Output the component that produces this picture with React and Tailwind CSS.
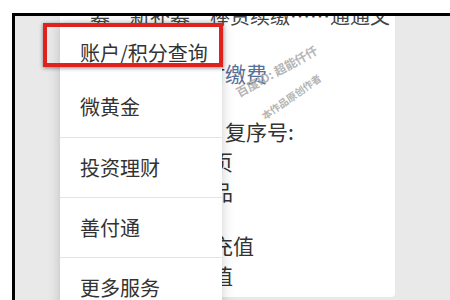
import React from 'react';

const menuItems = ['账户/积分查询', '微黄金', '投资理财', '善付通', '更多服务'];

const App = () => {
  return (
    <div
      className="w-[450px] h-[300px] bg-white pt-[13px] pl-[12px] overflow-hidden"
      style={{ fontFamily: '"Noto Sans CJK SC", "Noto Sans", sans-serif' }}
    >
      {/* framed screenshot area */}
      <div className="relative h-[290px] border-t-[3px] border-l-[3px] border-black bg-[#e9e9e9] flex">
        {/* content card behind the menu */}
        <div className="relative ml-[45px] w-[335px] h-[281px] bg-white rounded-br-[4px] overflow-hidden text-[#333]">
          <p className="mt-[-10px] pl-[30px] text-[20px] leading-[20px] whitespace-nowrap text-[#444]">
            募　新补募　棒资续缴……通通文
          </p>

          <div className="mt-[32px] pl-[123px] text-[21px] leading-[30px] whitespace-nowrap">
            <p>
              按时<span className="text-[#55709a]">缴费</span>
            </p>
          </div>

          <div className="mt-[28px] pl-[131px] text-[21px] leading-[30px] whitespace-nowrap">
            <p className="pl-[34px]">复序号:</p>
            <p>首页</p>
            <p>产品</p>
          </div>

          <div className="mt-[24px] pl-[131px] text-[21px] leading-[30px] whitespace-nowrap">
            <p>去充值</p>
            <p>余值</p>
          </div>

          {/* watermark */}
          <div className="absolute left-[171px] top-[46px] -rotate-[29deg] text-[12px] font-bold text-[#a3a3a3] opacity-80 whitespace-nowrap">
            百度ID: 超能仟仟
          </div>
          <div className="absolute left-[196px] top-[73px] -rotate-[35deg] text-[10px] font-bold text-[#a3a3a3] opacity-80 whitespace-nowrap">
            本作品原创作者
          </div>
        </div>

        {/* dropdown menu over the content */}
        <div className="absolute left-[45px] top-[8px] w-[162px] bg-white shadow-[0_0_12px_rgba(0,0,0,0.2)] text-[20px] text-[#333]">
          {menuItems.map((item, index) => (
            <div
              key={item}
              className={
                index === 0
                  ? 'h-[53px] flex items-center pl-[20px] pt-[4px]'
                  : index === 1
                    ? 'h-[60px] flex items-center pl-[20px]'
                    : 'h-[60px] flex items-center pl-[20px] border-t border-[#e4e4e4]'
              }
            >
              {item}
            </div>
          ))}
        </div>

        {/* red highlight box */}
        <div className="absolute left-[28px] top-[7px] w-[180px] h-[44px] border-[4px] border-[#e0221f] shadow-[0_1px_4px_rgba(0,0,0,0.45)]"></div>
      </div>
    </div>
  );
};

export default App;
